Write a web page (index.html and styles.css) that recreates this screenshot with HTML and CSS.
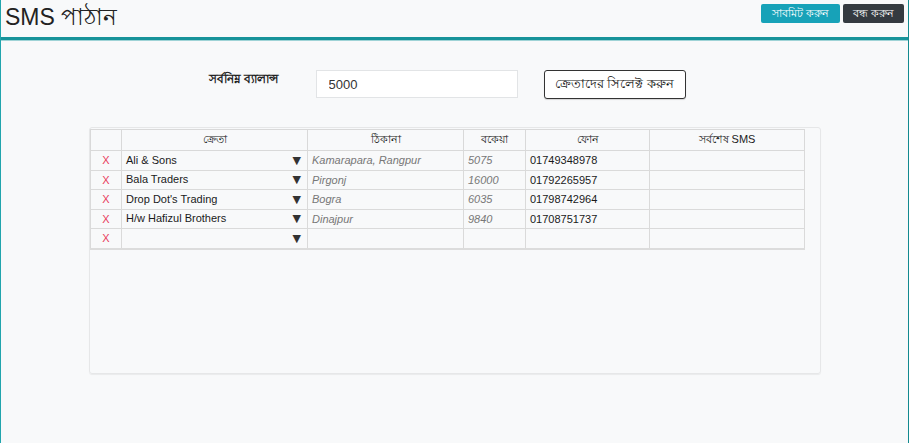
FILE: index.html
```html
<!DOCTYPE html>
<html lang="bn">
<head>
<meta charset="utf-8">
<title>SMS পাঠান</title>
<link rel="stylesheet" href="styles.css">
</head>
<body>
<div class="page">
  <header class="topbar">
    <h1 class="title">SMS পাঠান</h1>
    <div class="actions">
      <button class="btn btn-submit">সাবমিট করুন</button>
      <button class="btn btn-close">বন্ধ করুন</button>
    </div>
  </header>
  <main class="content">
    <div class="form-row">
      <label class="label">সর্বনিম্ন ব্যালান্স</label>
      <input class="input" type="text" value="5000">
      <button class="btn-select">ক্রেতাদের সিলেক্ট করুন</button>
    </div>
    <div class="card">
      <table class="grid">
        <colgroup>
          <col class="c-del"><col class="c-cust"><col class="c-addr"><col class="c-due"><col class="c-phone"><col class="c-sms">
        </colgroup>
        <thead>
          <tr><th></th><th>ক্রেতা</th><th>ঠিকানা</th><th>বকেয়া</th><th>ফোন</th><th>সর্বশেষ SMS</th></tr>
        </thead>
        <tbody>
          <tr><td class="del">X</td><td class="cust"><span>Ali &amp; Sons</span><span class="arrow">▼</span></td><td class="ro">Kamarapara, Rangpur</td><td class="ro">5075</td><td>01749348978</td><td></td></tr>
          <tr><td class="del">X</td><td class="cust"><span>Bala Traders</span><span class="arrow">▼</span></td><td class="ro">Pirgonj</td><td class="ro">16000</td><td>01792265957</td><td></td></tr>
          <tr><td class="del">X</td><td class="cust"><span>Drop Dot's Trading</span><span class="arrow">▼</span></td><td class="ro">Bogra</td><td class="ro">6035</td><td>01798742964</td><td></td></tr>
          <tr><td class="del">X</td><td class="cust"><span>H/w Hafizul Brothers</span><span class="arrow">▼</span></td><td class="ro">Dinajpur</td><td class="ro">9840</td><td>01708751737</td><td></td></tr>
          <tr><td class="del">X</td><td class="cust"><span></span><span class="arrow">▼</span></td><td></td><td></td><td></td><td></td></tr>
        </tbody>
      </table>
    </div>
  </main>
</div>
</body>
</html>
```
FILE: styles.css
```css
html, body {
  margin: 0;
  padding: 0;
  background: #f8f9fa;
}
body {
  font-family: "Liberation Sans", Arial, "Noto Sans", sans-serif;
  color: #222;
}
.page {
  min-height: 443px;
  box-sizing: border-box;
  border-left: 1px solid #21a5ad;
  border-right: 1px solid #138a8f;
}
.topbar {
  height: 37px;
  box-sizing: content-box;
  display: flex;
  justify-content: space-between;
  align-items: flex-start;
  padding: 0 4px 0 4px;
  border-bottom: 3px solid #17939a;
  box-shadow: 0 1px 0 #9fd3d6;
}
.title {
  margin: 3px 0 0 0;
  font-size: 23px;
  font-weight: normal;
  color: #222;
  line-height: 28px;
}
.actions {
  display: flex;
  gap: 3px;
  margin-top: 4px;
}
.btn {
  border: none;
  border-radius: 2px;
  color: #fff;
  font-family: "Liberation Sans", Arial, sans-serif;
  font-size: 11px;
  height: 19px;
  padding: 0 6px;
  line-height: 19px;
  cursor: pointer;
}
.btn-submit { background: #17a2b8; width: 79px; }
.btn-close { background: #343a40; width: 61px; }
.content {
  padding-top: 30px;
}
.form-row {
  display: flex;
  align-items: flex-start;
  justify-content: center;
  padding-right: 15px;
}
.label {
  font-size: 12px;
  font-weight: bold;
  width: 75px;
  margin-right: 32px;
  margin-top: 0;
  white-space: nowrap;
}
.input {
  width: 202px;
  height: 28px;
  box-sizing: border-box;
  border: 1px solid #e2e4e6;
  background: #fff;
  padding: 0 12px;
  font-family: "Liberation Sans", Arial, sans-serif;
  font-size: 13px;
  color: #333;
  margin-right: 26px;
}
.btn-select {
  width: 142px;
  height: 29px;
  box-sizing: border-box;
  border: 1px solid #333;
  border-radius: 3px;
  background: #fff;
  font-family: "Liberation Sans", Arial, sans-serif;
  font-size: 13px;
  color: #111;
  padding: 0 6px;
  box-shadow: 0 1px 1px rgba(0,0,0,0.15);
}
.card {
  margin: 28px 0 0 88px;
  width: 732px;
  height: 247px;
  box-sizing: border-box;
  border: 1px solid #e6e7e8;
  border-radius: 3px;
  box-shadow: 0 1px 1px rgba(0,0,0,0.06);
  padding: 1px 0 0 0;
}
.grid {
  border-collapse: collapse;
  width: 715px;
  table-layout: fixed;
  font-size: 11px;
  border-left: 1px solid #d9d9d9;
  border-right: 1px solid #d9d9d9;
  border-top: 1px solid #d9d9d9;
  border-bottom: 2px solid #dcdcdc;
}
.c-del { width: 31px; }
.c-cust { width: 186px; }
.c-addr { width: 156px; }
.c-due { width: 62px; }
.c-phone { width: 124px; }
.c-sms { width: 155px; }
.grid th {
  height: 20px;
  font-weight: normal;
  font-size: 11px;
  color: #222;
  border: 1px solid #d9d9d9;
  padding: 0 4px;
  text-align: center;
  background: #f8f9fa;
}
.grid td {
  height: 18.5px;
  border: 1px solid #dadada;
  padding: 0 4px;
  white-space: nowrap;
  overflow: hidden;
  color: #1a1a1a;
}
.grid td.del {
  color: #e8405e;
  text-align: center;
  font-size: 11px;
}
.grid td.cust {
  padding-right: 6px;
}
.cust span:first-child {
  display: inline-block;
}
.arrow {
  float: right;
  color: #333;
  font-size: 11px;
  font-family: "DejaVu Sans", sans-serif;
}
.grid td.ro {
  color: #777;
  font-style: italic;
}
```
